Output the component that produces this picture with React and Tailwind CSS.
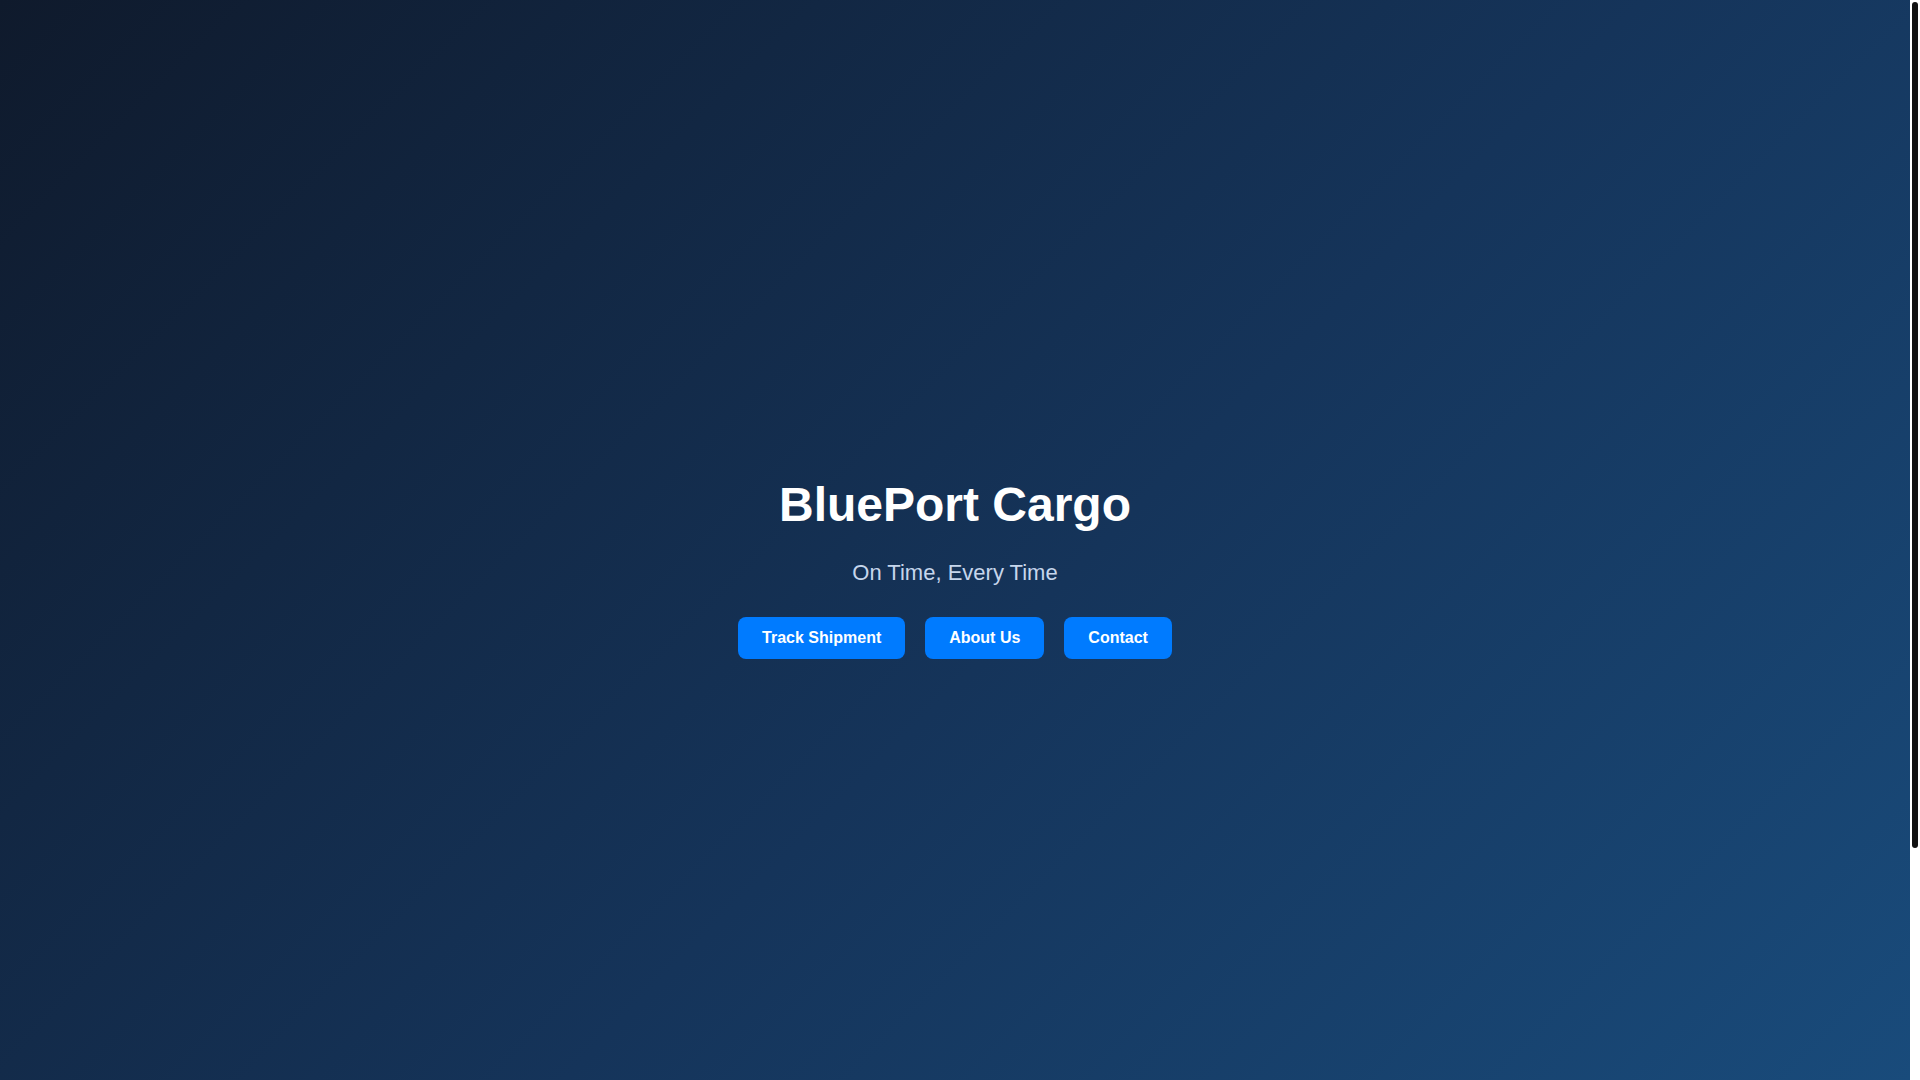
export default function App() {
  const buttons = ["Track Shipment", "About Us", "Contact"];

  return (
    <div
      className="h-screen flex bg-white overflow-hidden"
      style={{ fontFamily: '"Liberation Sans", Arial, sans-serif' }}
    >
      {/* Page */}
      <main className="flex-1 bg-[linear-gradient(135deg,#0f1a2c_0%,#15345a_55%,#194b7b_100%)] flex items-center justify-center pt-[56px]">
        <div className="flex flex-col items-center text-center">
          <h1 className="text-[48px] leading-[55px] font-bold text-white mb-[28px]">
            BluePort Cargo
          </h1>
          <p className="text-[22px] leading-[25px] text-[#c6d6ec] mb-[32px]">
            On Time, Every Time
          </p>
          <div className="flex gap-5">
            {buttons.map(function(label) {
              return (
                <button
                  key={label}
                  className="px-6 py-3 rounded-lg bg-[#007bff] text-white font-bold text-[16px] leading-[18px] hover:bg-[#0069d9] transition"
                >
                  {label}
                </button>
              );
            })}
          </div>
        </div>
      </main>

      {/* Scrollbar */}
      <div className="w-[10px] bg-white pt-[2px]">
        <div className="mx-auto w-[6px] h-[846px] rounded-full bg-[#111111]" />
      </div>
    </div>
  );
}
